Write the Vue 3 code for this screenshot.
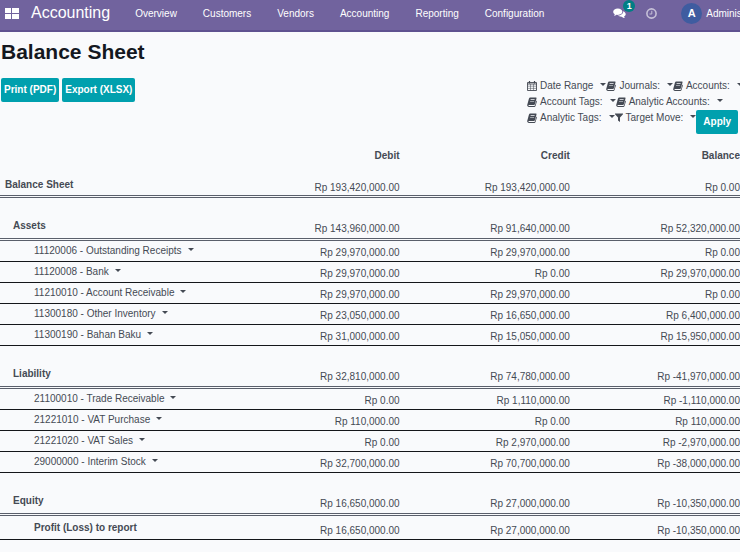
<script setup>
import { ref } from 'vue'

const menus = ['Overview', 'Customers', 'Vendors', 'Accounting', 'Reporting', 'Configuration']

const filterRows = [
  [
    { icon: 'calendar', label: 'Date Range' },
    { icon: 'book', label: 'Journals:' },
    { icon: 'book', label: 'Accounts:' }
  ],
  [
    { icon: 'book', label: 'Account Tags:' },
    { icon: 'book', label: 'Analytic Accounts:' }
  ],
  [
    { icon: 'book', label: 'Analytic Tags:' },
    { icon: 'filter', label: 'Target Move:' }
  ]
]

const lines = ref([
  { name: 'Balance Sheet', type: 'root', debit: '193,420,000.00', credit: '193,420,000.00', balance: '0.00' },
  { name: 'Assets', type: 'group', debit: '143,960,000.00', credit: '91,640,000.00', balance: '52,320,000.00' },
  { name: '11120006 - Outstanding Receipts', type: 'account', debit: '29,970,000.00', credit: '29,970,000.00', balance: '0.00' },
  { name: '11120008 - Bank', type: 'account', debit: '29,970,000.00', credit: '0.00', balance: '29,970,000.00' },
  { name: '11210010 - Account Receivable', type: 'account', debit: '29,970,000.00', credit: '29,970,000.00', balance: '0.00' },
  { name: '11300180 - Other Inventory', type: 'account', debit: '23,050,000.00', credit: '16,650,000.00', balance: '6,400,000.00' },
  { name: '11300190 - Bahan Baku', type: 'account', debit: '31,000,000.00', credit: '15,050,000.00', balance: '15,950,000.00' },
  { name: 'Liability', type: 'group', debit: '32,810,000.00', credit: '74,780,000.00', balance: '-41,970,000.00' },
  { name: '21100010 - Trade Receivable', type: 'account', debit: '0.00', credit: '1,110,000.00', balance: '-1,110,000.00' },
  { name: '21221010 - VAT Purchase', type: 'account', debit: '110,000.00', credit: '0.00', balance: '110,000.00' },
  { name: '21221020 - VAT Sales', type: 'account', debit: '0.00', credit: '2,970,000.00', balance: '-2,970,000.00' },
  { name: '29000000 - Interim Stock', type: 'account', debit: '32,700,000.00', credit: '70,700,000.00', balance: '-38,000,000.00' },
  { name: 'Equity', type: 'group', debit: '16,650,000.00', credit: '27,000,000.00', balance: '-10,350,000.00' },
  { name: 'Profit (Loss) to report', type: 'report', debit: '16,650,000.00', credit: '27,000,000.00', balance: '-10,350,000.00' }
])
</script>

<template>
  <div class="page">
    <header class="navbar">
      <button class="apps" aria-label="Apps">
        <svg width="14" height="11" viewBox="0 0 14 11" fill="currentColor">
          <rect width="6" height="5" />
          <rect x="7" width="7" height="5" />
          <rect y="6" width="6" height="5" />
          <rect x="7" y="6" width="7" height="5" />
        </svg>
      </button>
      <a class="brand" href="#">Accounting</a>
      <nav class="menus">
        <a v-for="menu in menus" :key="menu" href="#">{{ menu }}</a>
      </nav>
      <div class="systray">
        <button class="messages" aria-label="Messages">
          <svg width="13" height="11" viewBox="0 0 13 11" fill="currentColor">
            <path d="M4.8 0.5C2.2 0.5 0.2 1.9 0.2 3.8c0 1 .6 1.9 1.6 2.5-.2.6-.5 1-.9 1.5 1.1-.1 1.9-.5 2.6-1 .4.1.9.1 1.3.1 2.6 0 4.6-1.3 4.6-3.1S7.4.5 4.8.5z" />
            <path d="M10.2 3.2c.1 2.5-2.3 4.3-5.3 4.4.9.8 2.3 1.2 3.9 1.1.8.7 1.9 1.3 3.2 1.4-.5-.5-.8-1-.9-1.7 1-.5 1.6-1.3 1.6-2.2 0-1.3-1-2.4-2.5-3z" />
          </svg>
          <span class="badge">1</span>
        </button>
        <button class="activities" aria-label="Activities">
          <svg width="11" height="11" viewBox="0 0 11 11" fill="none" stroke="currentColor">
            <circle cx="5.5" cy="5.5" r="4.6" stroke-width="1.6" />
            <path d="M5.8 2.8v3.2H3.5" />
          </svg>
        </button>
        <button class="user">
          <span class="avatar">A</span>
          <span>Administrator</span>
        </button>
      </div>
    </header>

    <main>
      <h1>Balance Sheet</h1>
      <div class="controls">
        <div class="exports">
          <button class="btn">Print (PDF)</button>
          <button class="btn">Export (XLSX)</button>
        </div>
        <div class="filters">
          <div v-for="(row, index) in filterRows" :key="index" class="filter-row">
            <button v-for="item in row" :key="item.label" class="filter">
              <svg v-if="item.icon === 'calendar'" width="10" height="10" viewBox="0 0 10 10" fill="none" stroke="currentColor">
                <path d="M0.5 1.5h9v8h-9zM0.5 3h9" stroke-width="0.9" />
                <path d="M2.5 0v2.5M7.5 0v2.5" stroke-width="1.2" />
                <path d="M3.5 3v6.5M6.5 3v6.5M1 5.2h8M1 7.4h8" stroke-width="0.5" />
              </svg>
              <svg v-else-if="item.icon === 'book'" width="10" height="10" viewBox="0 0 10 10" fill="currentColor">
                <path fill-rule="evenodd" d="M3.3.5h5.4c.7 0 1 .5.8 1.1L7.9 7.2c-.1.5-.5.7-1 .7H2c-.5 0-.8.3-.7.7.1.3.4.4.8.4h5.2c.3 0 .5-.1.6-.4l1.500-5.200c.5.3.6.7.5 1.2L8.5 9.1c-.2.6-.6.9-1.2.9H2C.9 10 0 9.2.2 8.1L1.900 1.700C2.100.9 2.600.5 3.300.5zM3.700 2.300l-.2.6h4l.2-.6zM3.200 4l-.2.6h4l.2-.6z" />
              </svg>
              <svg v-else width="8" height="9" viewBox="0 0 8 9" fill="currentColor">
                <path d="M0 0.5h8v.8L5 4.6V9L3 7.5V4.6L0 1.3z" />
              </svg>
              <span>{{ item.label }}</span>
              <i class="caret"></i>
            </button>
            <button v-if="index === filterRows.length - 1" class="btn">Apply</button>
          </div>
        </div>
      </div>

      <table>
        <colgroup>
          <col class="col-name" />
          <col class="col-amount" />
          <col class="col-amount" />
          <col class="col-amount" />
        </colgroup>
        <thead>
          <tr>
            <th aria-label="Account"></th>
            <th scope="col">Debit</th>
            <th scope="col">Credit</th>
            <th scope="col">Balance</th>
          </tr>
        </thead>
        <tbody>
          <tr v-for="line in lines" :key="line.name" :class="line.type">
            <td class="name">
              <button v-if="line.type === 'account'" class="account-toggle">
                {{ line.name }}<i class="caret"></i>
              </button>
              <template v-else>{{ line.name }}</template>
            </td>
            <td class="amount">Rp {{ line.debit }}</td>
            <td class="amount">Rp {{ line.credit }}</td>
            <td class="amount">Rp {{ line.balance }}</td>
          </tr>
        </tbody>
      </table>
    </main>
  </div>
</template>

<style>
body {
  background: #f9fafc;
}
</style>

<style scoped>
.page {
  min-height: 100vh;
  overflow: hidden;
  background: #f9fafc;
  color: #454a54;
  font-family: "Liberation Sans", Arial, sans-serif;
  font-size: 10px;
  line-height: 12px;
}
button {
  padding: 0;
  border: 0;
  background: none;
  color: inherit;
  font: inherit;
  white-space: nowrap;
  cursor: pointer;
}
a {
  color: inherit;
  text-decoration: none;
}
svg {
  display: block;
  flex: none;
}
.navbar {
  display: flex;
  align-items: center;
  height: 30px;
  padding-left: 5px;
  border-bottom: 2px solid #5f5290;
  background: #71639e;
  color: #fff;
  white-space: nowrap;
}
.apps {
  padding-bottom: 4px;
}
.brand {
  padding: 0 0 4px 12px;
  font-size: 16px;
  line-height: 20px;
}
.menus {
  display: flex;
  gap: 26px;
  padding: 0 0 2px 25px;
}
.systray {
  display: flex;
  flex: 1;
  align-items: center;
  min-width: 0;
  padding: 0 0 3px 69px;
}
.messages {
  position: relative;
}
.badge {
  position: absolute;
  top: -8px;
  left: 10px;
  width: 12px;
  border-radius: 6px;
  background: #017e84;
  font-size: 9px;
  font-weight: bold;
}
.activities {
  margin-left: 20px;
  opacity: 0.6;
}
.user {
  display: flex;
  align-items: center;
  gap: 4px;
  margin-left: 24px;
}
.avatar {
  width: 21px;
  border-radius: 50%;
  background: #3f5ca0;
  font-size: 11px;
  font-weight: bold;
  line-height: 21px;
}
h1 {
  margin: 0;
  padding: 7px 0 0 1px;
  color: #14181f;
  font-size: 21px;
  line-height: 26px;
}
.controls {
  display: flex;
  justify-content: space-between;
  padding: 13px 0 0 1px;
}
.exports {
  display: flex;
  align-items: flex-start;
  gap: 3px;
}
.btn {
  padding: 6px 3px;
  border-radius: 2px;
  background: #00a0ae;
  color: #fff;
  font-weight: bold;
}
.filters {
  display: flex;
  flex-direction: column;
  gap: 1px;
  width: 213px;
}
.filter-row {
  display: flex;
  height: 15px;
  white-space: nowrap;
}
.filter-row .btn {
  align-self: flex-start;
  padding: 6px 7px;
}
.filter {
  display: flex;
  align-items: center;
  gap: 3px;
}
.caret {
  display: inline-block;
  flex: none;
  margin-bottom: 3px;
  border: 3px solid transparent;
  border-top-color: currentColor;
  border-bottom: 0;
}
.filter .caret {
  margin-left: 4px;
}
table {
  width: 100%;
  margin-top: 25px;
  border-spacing: 0;
  table-layout: fixed;
}
.col-name {
  width: 31%;
}
.col-amount {
  width: 23%;
}
th {
  padding: 0 0 12px;
  text-align: right;
}
td {
  padding: 4px 0;
  border-bottom: 1px solid #14161a;
  vertical-align: top;
  white-space: nowrap;
}
.name {
  padding-left: 34px;
}
.amount {
  padding-top: 6px;
  padding-bottom: 2px;
  text-align: right;
}
.account-toggle {
  display: flex;
  align-items: center;
  gap: 6px;
}
.root .name,
.group .name,
.report .name {
  font-weight: bold;
}
.root td,
.group td {
  border-bottom: 3px double #5a5f6b;
}
.root .name {
  padding-top: 5px;
  padding-left: 5px;
}
.root .amount {
  padding-top: 8px;
  padding-bottom: 1px;
}
.group .name {
  padding-top: 22px;
  padding-bottom: 6px;
  padding-left: 13px;
}
.group .amount {
  padding-top: 25px;
  padding-bottom: 3px;
}
.report .name {
  padding-top: 6px;
  padding-bottom: 5px;
}
.report .amount {
  padding-top: 9px;
}
</style>
